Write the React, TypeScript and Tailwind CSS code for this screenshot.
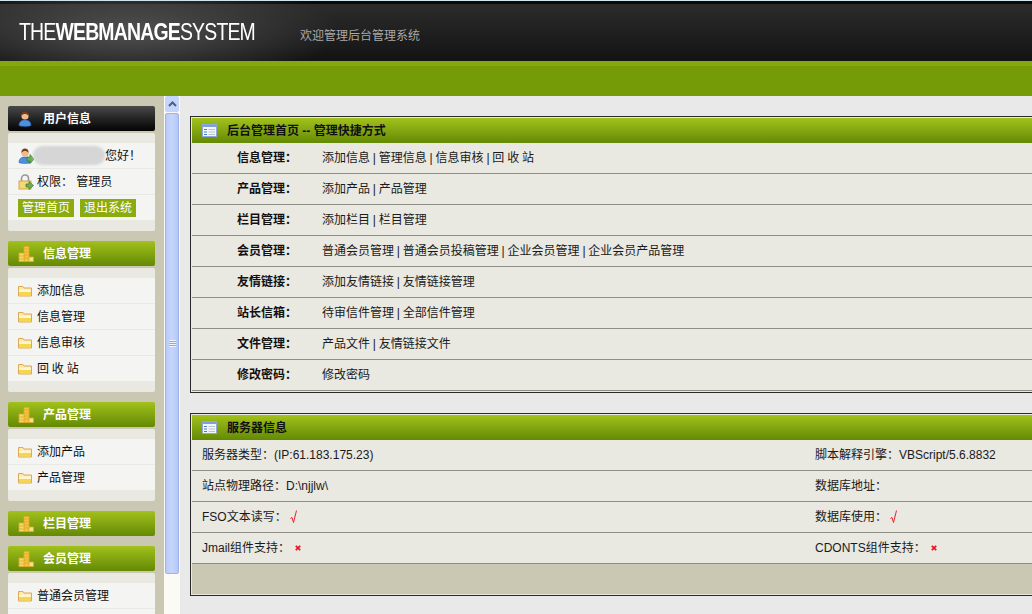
import type { ReactNode } from "react";

const FONT = "font-['Liberation_Sans','Noto_Sans_CJK_SC',sans-serif]";

const shortcutRows = [
  { label: "信息管理：", links: "添加信息 | 管理信息 | 信息审核 | 回 收 站" },
  { label: "产品管理：", links: "添加产品 | 产品管理" },
  { label: "栏目管理：", links: "添加栏目 | 栏目管理" },
  { label: "会员管理：", links: "普通会员管理 | 普通会员投稿管理 | 企业会员管理 | 企业会员产品管理" },
  { label: "友情链接：", links: "添加友情链接 | 友情链接管理" },
  { label: "站长信箱：", links: "待审信件管理 | 全部信件管理" },
  { label: "文件管理：", links: "产品文件 | 友情链接文件" },
  { label: "修改密码：", links: "修改密码" },
];

function UserIcon({ arrow }: { arrow?: boolean }) {
  return (
    <svg width="16" height="16" viewBox="0 0 16 16" className="shrink-0">
      <path d="M1 14.500c0-3.500 2-5.500 6-5.500s6 2 6 5.500c-2 1.200-10 1.200-12 0z" fill="#4d8fe0" stroke="#2a5fa8" strokeWidth=".6" />
      <circle cx="7" cy="5" r="3.600" fill="#f0b98c" />
      <path d="M3.400 5C3.200 1.800 5 .5 7 .5s3.800 1.300 3.600 4.500C9.500 3.500 8.500 3 7 3S4.500 3.500 3.400 5z" fill="#7a3d14" />
      {arrow && <path d="M9 9h3V6.500L16 11l-4 4.500V13H9z" fill="#6fae54" stroke="#2f7a2c" strokeWidth=".7" />}
    </svg>
  );
}

function LockIcon() {
  return (
    <svg width="16" height="16" viewBox="0 0 16 16" className="shrink-0">
      <path d="M3.500 7V4.500C3.500 2.500 5 1 7 1s3.500 1.500 3.500 3.500V7" fill="none" stroke="#9a9a9a" strokeWidth="1.600" />
      <rect x="1" y="7" width="12" height="8" fill="#f5d873" stroke="#c99a35" strokeWidth=".8" />
      <path d="M8 10h3V7.500L15.500 11.500 11 15.500V13H8z" fill="#6fae54" stroke="#2f7a2c" strokeWidth=".7" />
    </svg>
  );
}

function FolderIcon() {
  return (
    <svg width="14" height="12" viewBox="0 0 14 12" className="shrink-0">
      <path d="M.5 11V1.500h4.500l1 1.500h7.500V11z" fill="#fbe9a8" stroke="#dfa75a" />
      <path d="M1 7h12V10.500H1z" fill="#f6d54f" />
      <path d="M1 4.500h12V7H1z" fill="#fff6d0" />
    </svg>
  );
}

function CoinsIcon() {
  return (
    <svg width="16" height="16" viewBox="0 0 16 16" className="shrink-0">
      <rect x="6" y="0.500" width="5" height="15" fill="#f3c63f" stroke="#e0a92c" strokeWidth=".8" />
      <rect x="1" y="7" width="5" height="8.500" fill="#f7d868" stroke="#e0a92c" strokeWidth=".8" />
      <rect x="11" y="11" width="4.500" height="4.500" fill="#f7e08a" stroke="#e0a92c" strokeWidth=".8" />
      <path d="M6.500 3h4M6.500 6h4M6.500 9h4M6.500 12h4M1.500 10h4M1.500 13h4" stroke="#d99f22" strokeWidth=".7" />
    </svg>
  );
}

function TableIcon() {
  return (
    <svg width="15" height="13" viewBox="0 0 15 13" className="shrink-0">
      <rect x=".5" y=".5" width="14" height="12" fill="#f4f6fb" stroke="#8ea8d8" />
      <rect x="1" y="1" width="13" height="2" fill="#7f9fdc" />
      <path d="M2 5.500h3M2 8h3M2 10.500h3" stroke="#4b78d0" />
      <path d="M6.500 5.500h6.500M6.500 8h6.500M6.500 10.500h6.500" stroke="#b9c2cf" />
    </svg>
  );
}

function CheckMark() {
  return (
    <svg width="8" height="14" viewBox="0 0 8 14" className="ml-[3px] shrink-0">
      <path d="M0.500 8.500l1.500-1 1.500 5L6.500 .5" fill="none" stroke="#f0202c" strokeWidth="1" />
    </svg>
  );
}

function CrossMark() {
  return (
    <svg width="6" height="6" viewBox="0 0 6 6" className="ml-[5px] shrink-0">
      <path d="M.8.800l4.400 4.400M5.200.800L.8 5.200" stroke="#f01020" strokeWidth="1.700" />
    </svg>
  );
}

function SideTitle({ title, dark, icon }: { title: string; dark?: boolean; icon: ReactNode }) {
  return (
    <div
      className={`flex h-[25px] items-center gap-[9px] rounded-[2px] pl-[10px] text-xs font-bold text-white ${
        dark ? "bg-gradient-to-b from-[#4a4a4a] to-[#050505]" : "bg-gradient-to-b from-[#a2c11c] to-[#648a04]"
      }`}
    >
      {icon}
      <span>{title}</span>
    </div>
  );
}

function SideMenu({ title, items }: { title: string; items?: string[] }) {
  return (
    <div className="mb-[10px]">
      <SideTitle title={title} icon={<CoinsIcon />} />
      {items && (
        <div className="mt-[2px] rounded-[2px] bg-[#e9e9e1] pb-[11px] pt-[10px]">
          {items.map((item) => (
            <div
              key={item}
              className="flex h-[26px] items-center gap-[5px] border-b border-[#e9e9e4] bg-[#f4f4f2] pl-[10px] text-xs text-[#111] [word-spacing:-0.5px] last:h-[25px] last:border-b-0"
            >
              {item && <FolderIcon />}
              <span>{item}</span>
            </div>
          ))}
        </div>
      )}
    </div>
  );
}

function PanelHeader({ title }: { title: string }) {
  return (
    <div className="flex h-[25px] items-center gap-[10px] bg-gradient-to-b from-[#a3c21c] to-[#648a04] pl-[10px] text-xs font-bold text-[#111]">
      <TableIcon />
      <span>{title}</span>
    </div>
  );
}

function InfoCell({ children }: { children: ReactNode }) {
  return <div className="flex h-[31px] items-center border-b border-[#8f8f8a] pl-[10px] text-xs text-[#1a1a1a]">{children}</div>;
}

export default function App() {
  return (
    <div className={`flex h-[614px] w-[1032px] flex-col overflow-hidden bg-[#e9e9e9] ${FONT}`}>
      <header className="flex h-[61px] shrink-0 items-start border-t border-[#cfe6ee] bg-[radial-gradient(ellipse_210px_55px_at_130px_30px,#505050,transparent),linear-gradient(#0a0a0a_3px,#2c2c2c_3px,#131313)] pl-[19px] pt-[17px]">
        <div className="w-[281px] text-[24px] leading-[28px] tracking-[-1px] text-white">
          <span className="inline-block origin-left scale-x-[0.81] whitespace-nowrap">
            THE<b>WEBMANAGE</b>SYSTEM
          </span>
        </div>
        <div className="pt-[10px] text-xs text-[#a9a9a9]">欢迎管理后台管理系统</div>
      </header>
      <div className="h-[35px] shrink-0 border-t-[5px] border-[#86a80d] bg-[#759b07]" />

      <div className="flex min-h-0 flex-1">
        <aside className="w-[164px] shrink-0 overflow-hidden bg-[#cac7b2] pl-[8px] pr-[9px] pt-[10px]">
          <div className="mb-[10px]">
            <SideTitle title="用户信息" dark icon={<UserIcon />} />
            <div className="mt-[2px] rounded-[2px] bg-[#e9e9e1] pb-[11px] pt-[10px] text-xs text-[#111]">
              <div className="flex h-[26px] items-center border-b border-[#e9e9e4] bg-[#f4f4f2] pl-[10px]">
                <UserIcon arrow />
                <div className="ml-[-1px] h-[19px] w-[72px] rounded-full bg-[#d6d6d6] blur-[1px]" />
                <span>您好！</span>
              </div>
              <div className="flex h-[26px] items-center gap-[3px] border-b border-[#e9e9e4] bg-[#f4f4f2] pl-[10px]">
                <LockIcon />
                <span>权限： 管理员</span>
              </div>
              <div className="flex h-[25px] items-center gap-[6px] bg-[#f4f4f2] pl-[10px]">
                <span className="bg-[#8cab0e] px-[4px] py-[1px] leading-[16px] text-white">管理首页</span>
                <span className="bg-[#8cab0e] px-[4px] py-[1px] leading-[16px] text-white">退出系统</span>
              </div>
            </div>
          </div>
          <SideMenu title="信息管理" items={["添加信息", "信息管理", "信息审核", "回 收 站"]} />
          <SideMenu title="产品管理" items={["添加产品", "产品管理"]} />
          <SideMenu title="栏目管理" />
          <SideMenu title="会员管理" items={["普通会员管理", ""]} />
        </aside>

        <div className="flex w-[16px] shrink-0 flex-col border-l border-r border-[#fbfaf5] bg-[#fbfaf5]">
          <div className="flex h-[16px] shrink-0 items-center justify-center rounded-[2px] border border-[#c6d4f5] bg-[#c5d5fb]">
            <svg width="9" height="6" viewBox="0 0 9 6">
              <path d="M1 5l3.500-3.500L8 5" fill="none" stroke="#4d6185" strokeWidth="2" />
            </svg>
          </div>
          <div className="mt-px flex h-[461px] shrink-0 items-center justify-center rounded-[2px] border border-[#9db4e6] bg-gradient-to-r from-[#b9cbf8] via-[#c6d5fc] to-[#b4c7f6]">
            <div className="h-[7px] w-[7px] border-y border-[#eef3ff] bg-[repeating-linear-gradient(#8fa8e8_0,#8fa8e8_1px,#eef3ff_1px,#eef3ff_2px)]" />
          </div>
        </div>

        <main className="min-w-0 flex-1 overflow-hidden pl-[10px] pt-[20px]">
          <section className="w-[900px] border border-r-0 border-[#2a2a2a] bg-[#e9e8e1] pb-px pl-px pt-px">
            <PanelHeader title="后台管理首页 -- 管理快捷方式" />
            {shortcutRows.map((row) => (
              <div key={row.label} className="flex h-[31px] items-center border-b border-[#8f8f8a] text-xs text-[#1a1a1a]">
                <span className="w-[130px] pl-[45px] font-bold text-[#111]">{row.label}</span>
                <span className="[word-spacing:-0.5px]">{row.links}</span>
              </div>
            ))}
          </section>

          <section className="mt-[20px] w-[900px] border border-r-0 border-[#2a2a2a] bg-[#e9e8e1] pb-px pl-px pt-px">
            <PanelHeader title="服务器信息" />
            <div className="grid grid-cols-[613px_1fr]">
              <InfoCell>服务器类型：(IP:61.183.175.23)</InfoCell>
              <InfoCell>脚本解释引擎：VBScript/5.6.8832</InfoCell>
              <InfoCell>站点物理路径：D:\njjlw\</InfoCell>
              <InfoCell>数据库地址：</InfoCell>
              <InfoCell>
                FSO文本读写：
                <CheckMark />
              </InfoCell>
              <InfoCell>
                数据库使用：
                <CheckMark />
              </InfoCell>
              <InfoCell>
                Jmail组件支持：
                <CrossMark />
              </InfoCell>
              <InfoCell>
                CDONTS组件支持：
                <CrossMark />
              </InfoCell>
            </div>
            <div className="h-[30px] bg-[#cac7b2]" />
          </section>
        </main>
      </div>
    </div>
  );
}
